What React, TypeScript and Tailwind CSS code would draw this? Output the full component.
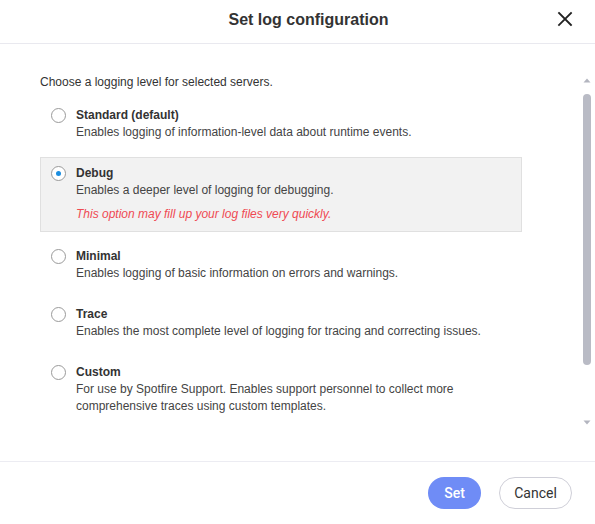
import React from "react";

type Opt = { title: string; desc: string[]; warn?: string; selected?: boolean };

const options: Opt[] = [
  { title: "Standard (default)", desc: ["Enables logging of information-level data about runtime events."] },
  {
    title: "Debug",
    desc: ["Enables a deeper level of logging for debugging."],
    warn: "This option may fill up your log files very quickly.",
    selected: true,
  },
  { title: "Minimal", desc: ["Enables logging of basic information on errors and warnings."] },
  { title: "Trace", desc: ["Enables the most complete level of logging for tracing and correcting issues."] },
  {
    title: "Custom",
    desc: [
      "For use by Spotfire Support. Enables support personnel to collect more",
      "comprehensive traces using custom templates.",
    ],
  },
];

function Radio({ checked }: { checked?: boolean }) {
  return (
    <div className="mt-[1px] flex h-[15px] w-[15px] shrink-0 items-center justify-center rounded-full border border-[#9a9a9a] bg-white">
      {checked && <div className="h-[5px] w-[5px] rounded-full bg-[#1b8ee0]" />}
    </div>
  );
}

export default function App() {
  return (
    <div className="flex h-[524px] w-[595px] flex-col bg-white font-['Liberation_Sans',Arial,sans-serif] text-[#333]">
      <div className="flex h-[44px] shrink-0 items-center border-b border-[#e9e9ef] pb-[4px] pl-[40px] pr-[22px]">
        <div className="flex-1 pl-[20px] text-center text-[16px] font-bold text-[#333]">Set log configuration</div>
        <svg width="16" height="16" viewBox="0 0 16 16" className="mb-[1px]">
          <path d="M2 2L14 14M14 2L2 14" stroke="#222" strokeWidth="1.8" strokeLinecap="square" />
        </svg>
      </div>
      <div className="flex flex-1 flex-row">
        <div className="ml-[40px] w-[482px] pt-[30px]">
          <div className="text-[12px] leading-[17px] text-[#333]">Choose a logging level for selected servers.</div>
          <div className="mt-[8px] flex flex-col gap-[8px]">
            {options.map((o) => (
              <div
                key={o.title}
                className={
                  o.selected
                    ? "flex gap-[10px] border border-[#e0e0e0] bg-[#f2f2f2] pb-[8px] pt-[7px] pl-[10px]"
                    : "flex gap-[10px] border border-transparent py-[7px] pl-[10px]"
                }
              >
                <Radio checked={o.selected} />
                <div className="text-[12px] leading-[17px]">
                  <div className="font-bold text-[#333]">{o.title}</div>
                  {o.desc.map((d) => (
                    <div key={d} className="text-[#444]">{d}</div>
                  ))}
                  {o.warn && <div className="mt-[7px] italic text-[#ef4a52]">{o.warn}</div>}
                </div>
              </div>
            ))}
          </div>
        </div>
        <div className="ml-auto mr-[4px] flex w-[8px] flex-col items-center pt-[34px]">
          <svg width="8" height="5" viewBox="0 0 8 5">
            <path d="M0.5 4.5L4 0.5L7.5 4.5Z" fill="#b3b5bf" />
          </svg>
          <div className="mt-[11px] h-[271px] w-[8px] rounded-full bg-[#b9bbc5]" />
          <div className="mt-[55px]">
            <svg width="8" height="5" viewBox="0 0 8 5">
              <path d="M0.5 0.5L4 4.5L7.5 0.5Z" fill="#b3b5bf" />
            </svg>
          </div>
        </div>
      </div>
      <div className="flex h-[63px] shrink-0 items-center justify-end gap-[18px] border-t border-[#ececf2] pr-[23px]">
        <button className="h-[32px] w-[53px] rounded-full bg-[#6f8cf6] text-[14px] font-medium text-white font-['Roboto',Arial,sans-serif]">
          Set
        </button>
        <button className="h-[32px] w-[73px] rounded-full border border-[#cfcfd8] bg-white text-[14px] text-[#333] font-['Roboto',Arial,sans-serif]">
          Cancel
        </button>
      </div>
    </div>
  );
}
